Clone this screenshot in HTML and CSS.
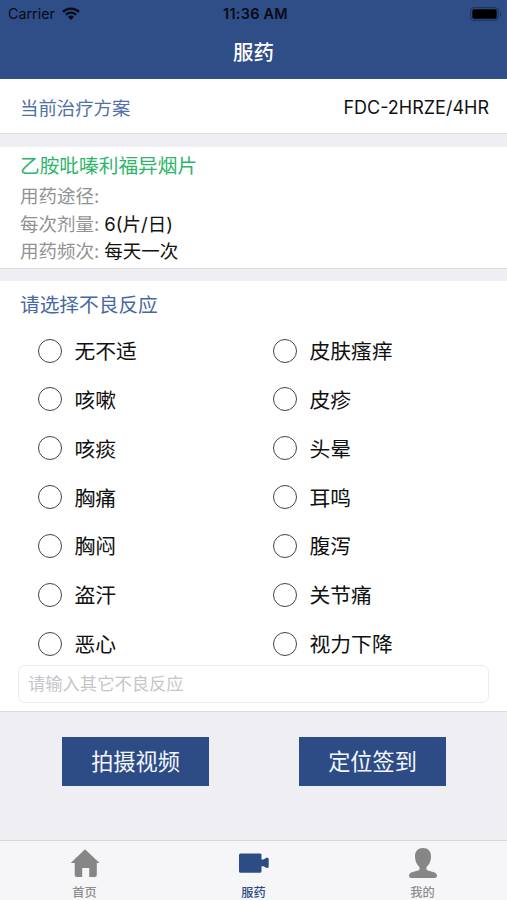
FILE: index.html
```html
<!DOCTYPE html>
<html lang="zh-CN">
<head>
<meta charset="utf-8">
<meta name="viewport" content="width=device-width, initial-scale=1">
<title>服药</title>
<link rel="stylesheet" href="styles.css">
</head>
<body>
<div class="app">
  <header class="header">
    <div class="status">
      <div class="carrier"><span>Carrier</span>
        <svg class="wifi" viewBox="0 0 18 13" width="18" height="13"><path d="M1 4.8A11.5 11.5 0 0 1 17 4.8M3.9 7.8A7.3 7.3 0 0 1 14.1 7.8" fill="none" stroke="#060b16" stroke-width="2.3"/><path d="M6 10A4.3 4.3 0 0 1 12 10L9 13Z" fill="#060b16"/></svg>
      </div>
      <div class="time">11:36 AM</div>
      <svg class="battery" viewBox="0 0 32 14" width="32" height="14"><rect x=".7" y=".7" width="27.6" height="12.6" rx="3" fill="none" stroke="#1b3157"/><rect x="2.3" y="2.3" width="24.4" height="9.4" rx="1.7" fill="#000"/><path d="M30 4.8q2 2.2 0 4.4z" fill="#1b3157"/></svg>
    </div>
    <h1 class="title">服药</h1>
  </header>
  <section class="plan">
    <span class="plan-label">当前治疗方案</span>
    <span class="plan-code">FDC-2HRZE/4HR</span>
  </section>
  <section class="drug">
    <h2 class="drug-name">乙胺吡嗪利福异烟片</h2>
    <p class="row"><span>用药途径:</span></p>
    <p class="row"><span>每次剂量:</span><b>6(片/日)</b></p>
    <p class="row"><span>用药频次:</span><b>每天一次</b></p>
  </section>
  <section class="reactions">
    <h2 class="reactions-title">请选择不良反应</h2>
    <div class="options">
      <label class="option"><input type="radio"><span>无不适</span></label>
      <label class="option"><input type="radio"><span>皮肤瘙痒</span></label>
      <label class="option"><input type="radio"><span>咳嗽</span></label>
      <label class="option"><input type="radio"><span>皮疹</span></label>
      <label class="option"><input type="radio"><span>咳痰</span></label>
      <label class="option"><input type="radio"><span>头晕</span></label>
      <label class="option"><input type="radio"><span>胸痛</span></label>
      <label class="option"><input type="radio"><span>耳鸣</span></label>
      <label class="option"><input type="radio"><span>胸闷</span></label>
      <label class="option"><input type="radio"><span>腹泻</span></label>
      <label class="option"><input type="radio"><span>盗汗</span></label>
      <label class="option"><input type="radio"><span>关节痛</span></label>
      <label class="option"><input type="radio"><span>恶心</span></label>
      <label class="option"><input type="radio"><span>视力下降</span></label>
    </div>
    <input class="other" type="text" placeholder="请输入其它不良反应">
  </section>
  <div class="actions">
    <button class="action">拍摄视频</button>
    <button class="action">定位签到</button>
  </div>
  <nav class="tabs">
    <a class="tab">
      <svg viewBox="0 0 30 32" width="30" height="32"><path d="M15 2.2L29.5 16H26.8V28Q26.8 30 24.8 30H19.2V21H12.2V30H6.7Q4.7 30 4.7 28V16H.7Z" fill="#868686"/></svg>
      <span>首页</span>
    </a>
    <a class="tab active">
      <svg viewBox="0 0 30 32" width="30" height="32"><path d="M1.5 6.5H21.2Q22.5 6.5 22.5 7.8V12.5H24.5L27.8 10.5Q29.7 10.8 29.7 12V19.5Q29.7 21 27.8 21L24.5 19.2H22.5V24.2Q22.5 25.7 21 25.7H1.5Q0 25.7 0 24.2V8Q0 6.5 1.5 6.5Z" fill="#2d4c86"/></svg>
      <span>服药</span>
    </a>
    <a class="tab">
      <svg viewBox="0 0 30 32" width="30" height="32"><path d="M15 1C20 1 23 4 23 9.5C23 14 21.2 17.5 19 19.4Q18 20.5 18.5 22.5C20 24.8 29 24.3 29 28.5Q29 31 26.5 31H3.5Q1 31 1 28.5C1 24.3 10 24.8 11.5 22.5Q12 20.5 11 19.4C8.8 17.5 7 14 7 9.5C7 4 10 1 15 1Z" fill="#868686"/></svg>
      <span>我的</span>
    </a>
  </nav>
</div>
</body>
</html>
```
FILE: styles.css
```css
* {
  box-sizing: border-box;
}

body,
h1,
h2,
p {
  margin: 0;
  font-weight: 400;
}

body,
input,
button {
  font-family: Inter, "Noto Sans CJK SC", sans-serif;
}

.app {
  display: flex;
  flex-direction: column;
  height: 900px;
  background: #eeeef3;
  color: #111;
}

.header {
  height: 79px;
  background: #2f4d86;
}

.status {
  display: grid;
  grid-template-columns: 1fr auto 1fr;
  align-items: center;
  height: 28px;
  padding: 0 5px 1px 8px;
  color: #060b16;
  font-size: 14.3px;
}

.carrier {
  display: flex;
  align-items: center;
  gap: 7px;
}

.wifi {
  margin-top: -1px;
}

.time {
  padding-left: 1px;
  font-size: 14.4px;
  font-weight: 600;
  letter-spacing: 0.3px;
}

.battery {
  justify-self: end;
}

.title {
  height: 51px;
  color: #fff;
  font-size: 20.5px;
  font-weight: 500;
  line-height: 50px;
  text-align: center;
}

.plan {
  display: flex;
  align-items: center;
  justify-content: space-between;
  height: 55px;
  padding: 2px 18px 0 20px;
  background: #fff;
  border-bottom: 1px solid #dcdcdf;
}

.plan-label {
  color: #5271a5;
  font-size: 18.4px;
}

.plan-code {
  font-size: 18px;
}

.drug {
  height: 122px;
  margin-top: 13px;
  padding: 5px 19px 0 20px;
  background: #fff;
  border-bottom: 1px solid #dcdcdf;
}

.drug-name {
  height: 30px;
  color: #2fb56b;
  font-size: 19.7px;
  line-height: 28px;
}

.row {
  display: flex;
  gap: 5px;
  height: 27.7px;
  font-size: 18.5px;
  line-height: 28px;
}

.row span {
  color: #929292;
}

.row b {
  font-weight: 400;
}

.reactions {
  height: 431px;
  margin-top: 12px;
  padding: 0 18px;
  background: #fff;
  border-bottom: 1px solid #dcdcdf;
}

.reactions-title {
  height: 45px;
  padding-left: 2px;
  color: #4669a2;
  font-size: 19.7px;
  line-height: 48px;
}

.options {
  display: grid;
  grid-template-columns: 235px 1fr;
  grid-auto-rows: 48.85px;
  height: 339px;
  padding-left: 20px;
}

.option {
  display: flex;
  align-items: center;
  gap: 12.5px;
  height: 49px;
  font-size: 20.8px;
}

.option span {
  padding-bottom: 1px;
}

.option input {
  appearance: none;
  width: 24px;
  height: 24px;
  margin: 0;
  border: 1.3px solid #444;
  border-radius: 50%;
}

.other {
  display: block;
  width: 471px;
  height: 38px;
  padding: 0 9px 2px;
  border: 1.5px solid #ebebec;
  border-radius: 7px;
  background: #fff;
  font-size: 17.3px;
}

.other::placeholder {
  color: #c5c5c9;
  opacity: 1;
}

.actions {
  display: flex;
  flex: 1;
  gap: 90px;
  align-items: flex-start;
  padding: 25px 0 0 62px;
}

.action {
  width: 147px;
  height: 49px;
  padding: 0 0 3px;
  border: 0;
  background: #2d4c86;
  color: #f4f7fc;
  font-size: 22.2px;
}

.tabs {
  display: grid;
  grid-template-columns: repeat(3, 1fr);
  height: 60px;
  border-top: 1px solid #d8d8dc;
  background: #f6f6f8;
}

.tab {
  display: flex;
  flex-direction: column;
  align-items: center;
  padding-top: 6px;
  color: #8d8d8d;
  font-size: 12.2px;
  font-weight: 500;
  line-height: 16px;
}

.tab span {
  margin-top: 6px;
}

.active {
  color: #2d4c86;
}
```
